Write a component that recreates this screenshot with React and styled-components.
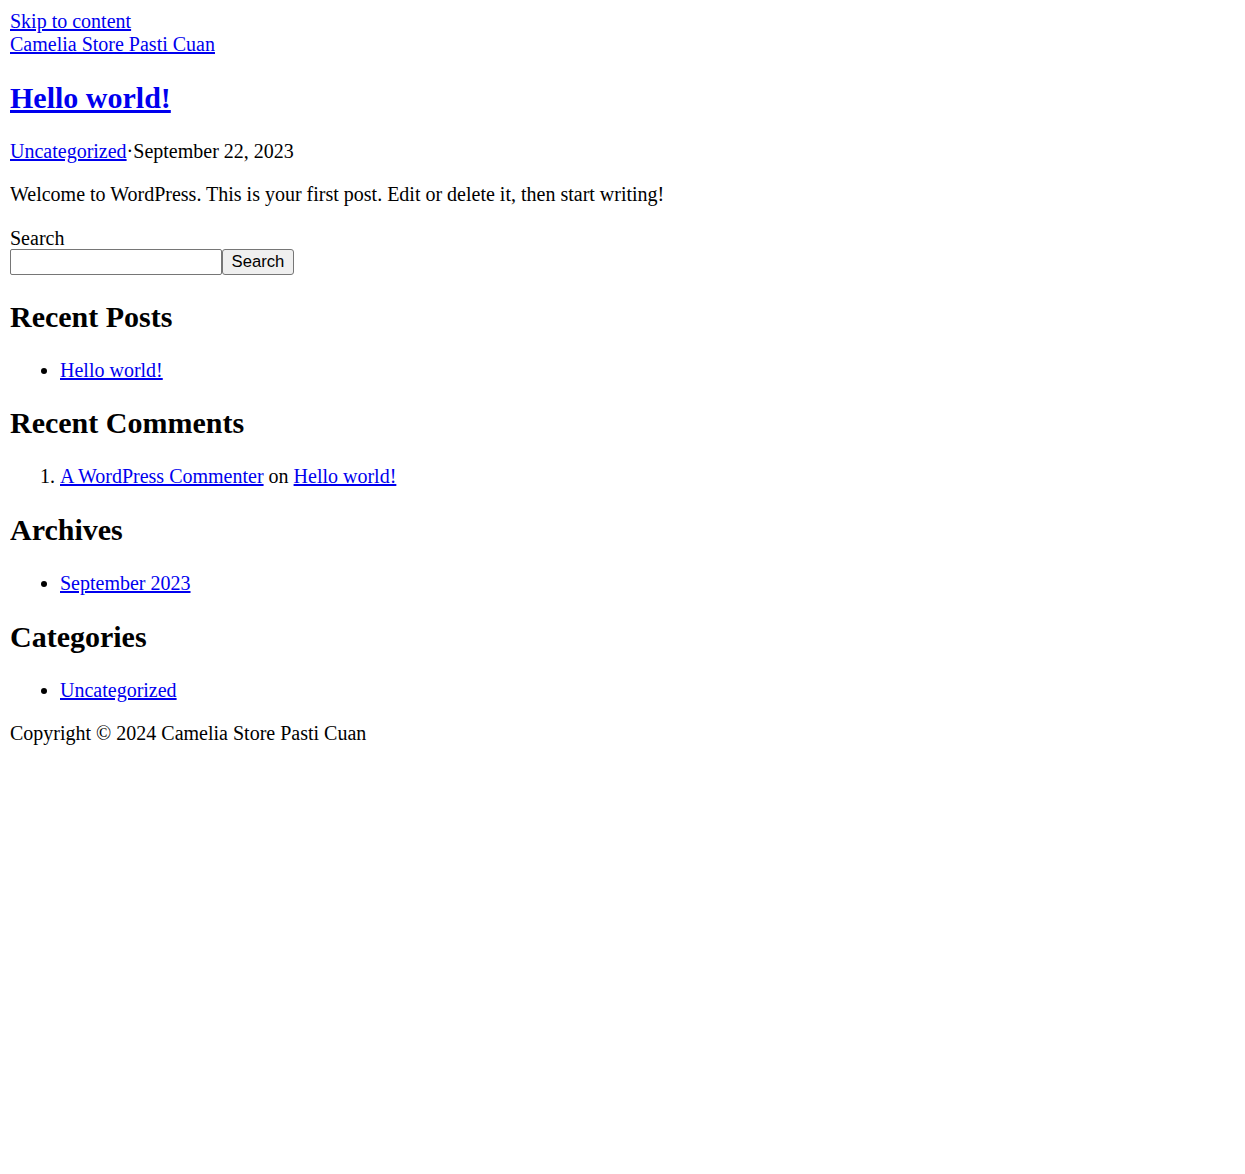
import React from "react";
import styled, { createGlobalStyle } from "styled-components";

const Global = createGlobalStyle`
  html, body { background: #fff; }
  body {
    margin: 10px;
    font-family: "Liberation Serif", "Times New Roman", serif;
    font-size: 20px;
    line-height: normal;
    color: #000;
  }
`;

const Link = styled.a`
  color: #0000ee;
  text-decoration: underline;
  cursor: pointer;
`;

const BlockLink = styled.div`
  display: block;
`;

const PostTitle = styled.h2`
  font-size: 30px;
  font-weight: bold;
  margin: 24.9px 0;
`;

const Para = styled.p`
  margin: 20px 0;
`;

const SearchForm = styled.form`
  margin: 0;
`;

const SearchLabel = styled.label`
  display: block;
  padding-top: 1px;
`;

const SearchRow = styled.div`
  display: flex;
  align-items: stretch;
  margin-top: -1px;
`;

const SearchInput = styled.input`
  box-sizing: border-box;
  width: 212px;
  height: 26px;
  margin: 0;
  padding: 1px 3px;
  border: 1px solid #767676;
  border-radius: 2px;
  font-family: "Liberation Sans", Arial, sans-serif;
  font-size: 16.67px;
  background: #fff;
`;

const SearchButton = styled.button`
  box-sizing: border-box;
  width: 72px;
  height: 26px;
  margin: 0;
  padding: 1px 8px;
  border: 1px solid #767676;
  border-radius: 3px;
  background: #efefef;
  color: #000;
  font-family: "Liberation Sans", Arial, sans-serif;
  font-size: 16.67px;
`;

const WidgetTitle = styled.h2`
  font-size: 30px;
  font-weight: bold;
  margin: 24.9px 0;
`;

const BulletList = styled.ul`
  margin: 20px 0;
  padding-left: 50px;
  list-style: disc;
`;

const NumberList = styled.ol`
  margin: 20px 0;
  padding-left: 50px;
`;

const Footer = styled.p`
  margin: 20px 0;
`;

export default function App() {
  return (
    <>
      <Global />
      <BlockLink>
        <Link href="#content">Skip to content</Link>
      </BlockLink>
      <BlockLink>
        <Link href="#">Camelia Store Pasti Cuan</Link>
      </BlockLink>
      <main id="content">
        <article>
          <PostTitle>
            <Link href="#">Hello world!</Link>
          </PostTitle>
          <Para>
            <Link href="#">Uncategorized</Link>·September 22, 2023
          </Para>
          <Para>
            Welcome to WordPress. This is your first post. Edit or delete it,
            then start writing!
          </Para>
        </article>
      </main>
      <aside>
        <SearchForm onSubmit={(e) => e.preventDefault()}>
          <SearchLabel htmlFor="s">Search</SearchLabel>
          <SearchRow>
            <SearchInput id="s" type="search" />
            <SearchButton type="submit">Search</SearchButton>
          </SearchRow>
        </SearchForm>
        <section>
          <WidgetTitle>Recent Posts</WidgetTitle>
          <BulletList>
            <li>
              <Link href="#">Hello world!</Link>
            </li>
          </BulletList>
        </section>
        <section>
          <WidgetTitle>Recent Comments</WidgetTitle>
          <NumberList>
            <li>
              <Link href="#">A WordPress Commenter</Link> on{" "}
              <Link href="#">Hello world!</Link>
            </li>
          </NumberList>
        </section>
        <section>
          <WidgetTitle>Archives</WidgetTitle>
          <BulletList>
            <li>
              <Link href="#">September 2023</Link>
            </li>
          </BulletList>
        </section>
        <section>
          <WidgetTitle>Categories</WidgetTitle>
          <BulletList>
            <li>
              <Link href="#">Uncategorized</Link>
            </li>
          </BulletList>
        </section>
      </aside>
      <Footer>Copyright © 2024 Camelia Store Pasti Cuan</Footer>
    </>
  );
}
